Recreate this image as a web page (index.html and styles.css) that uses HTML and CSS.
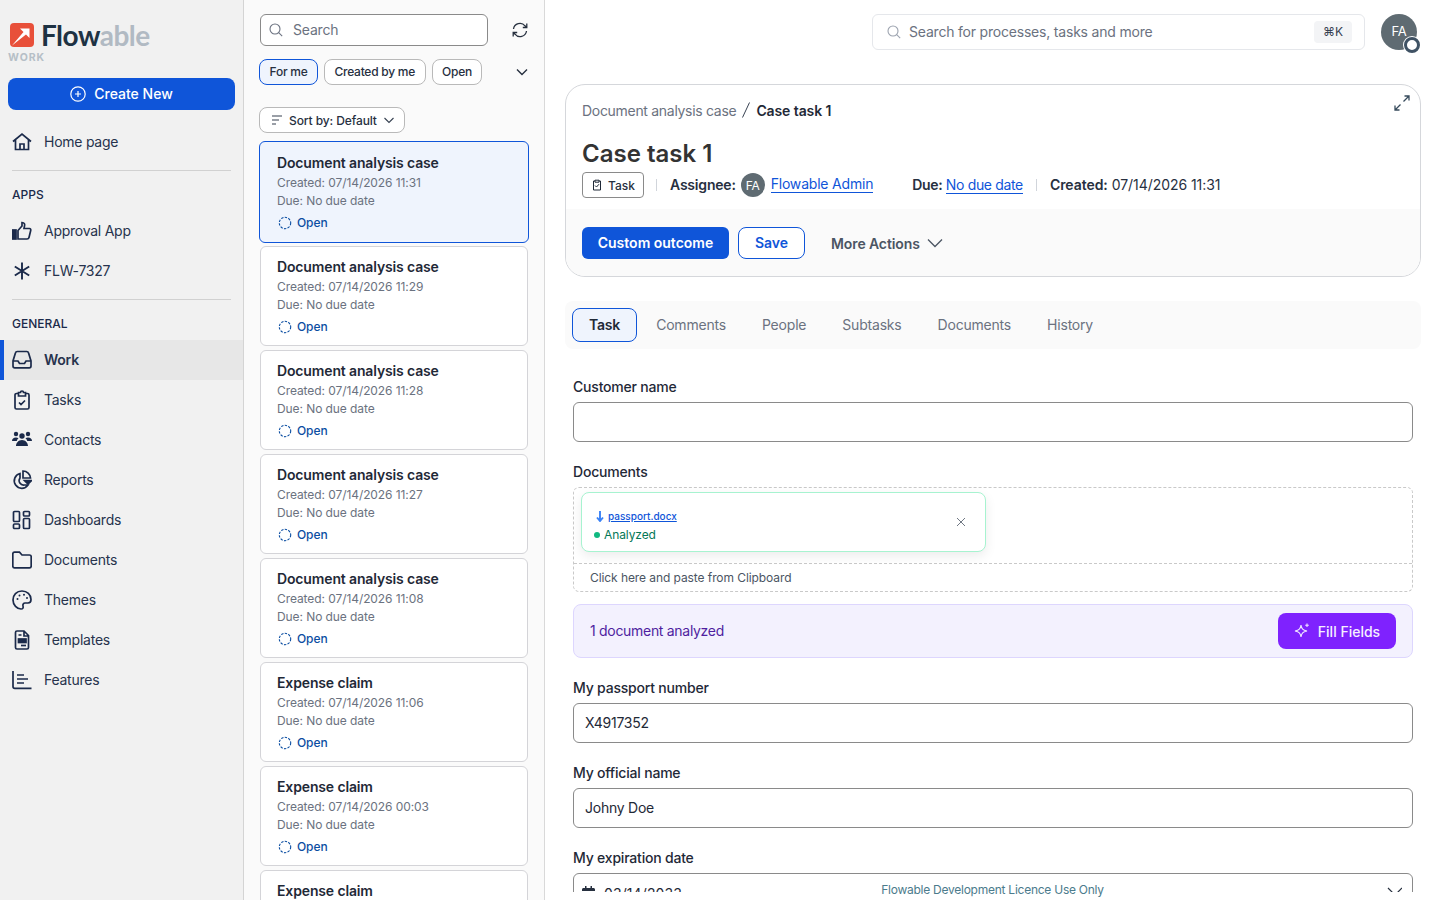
FILE: index.html
```html
<!DOCTYPE html>
<html lang="en">
<head>
    <meta charset="UTF-8">
    <meta name="viewport" content="width=device-width, initial-scale=1.0">
    <title>Flowable Work</title>
    <link rel="stylesheet" href="styles.css">
</head>
<body>
<div class="app">

    <!-- left navigation -->
    <aside class="sidebar">
        <div class="logo">
            <div class="logo-row">
                <svg class="logo-mark" viewBox="0 0 24 24" width="24" height="24">
                    <rect x="0" y="0" width="24" height="24" rx="4" fill="#e8503a"/>
                    <path d="M2 22.500 L13.500 9 L10 5.500 H19.500 V15 L16 11.500 Z" fill="#fff"/>
                </svg>
                <span class="logo-text">Flow<span class="logo-light">able</span></span>
            </div>
            <div class="logo-sub">WORK</div>
        </div>
        <button class="btn-create">
            <svg width="16" height="16" viewBox="0 0 16 16" fill="none" stroke="#fff" stroke-width="1.2"><circle cx="8" cy="8" r="7.2"/><path d="M8 5v6M5 8h6"/></svg>
            Create New
        </button>

        <a class="nav-item home">
            <svg class="nav-icon" viewBox="0 0 20 20"><path d="M1 9.5 10 2l9 7.5M3.5 8v9.5h13V8M8 17.5v-5.500h4v5.500"/></svg>
            Home page
        </a>
        <div class="nav-divider"></div>
        <div class="nav-heading">APPS</div>
        <a class="nav-item">
            <svg class="nav-icon" viewBox="0 0 20 20"><rect x="0.500" y="9" width="3.500" height="9" fill="#1b2a4a"/><path d="M6 9.500 10 5V1.500c2.500 0 3 2 2.500 3.500L12 7.500h5.500c1 0 1.500 1 1.200 2l-1.700 7c-.2.800-.8 1.500-2 1.500H6z"/></svg>
            Approval App
        </a>
        <a class="nav-item">
            <svg class="nav-icon asterisk" viewBox="0 0 20 20"><path d="M10 1.500v17M2.800 5.500l14.400 9M17.200 5.500l-14.400 9"/></svg>
            FLW-7327
        </a>
        <div class="nav-divider"></div>
        <div class="nav-heading">GENERAL</div>
        <a class="nav-item active">
            <svg class="nav-icon" viewBox="0 0 20 20"><path d="M1 11V16c0 1 .8 1.800 1.800 1.800h14.400c1 0 1.800-.8 1.800-1.800v-5l-2.500-8.200c-.2-.8-.8-1.300-1.700-1.300H5.200c-.9 0-1.500.5-1.700 1.300zM1 11h5l1.500 2.500h5L14 11h5"/></svg>
            Work
        </a>
        <a class="nav-item">
            <svg class="nav-icon" viewBox="0 0 20 20"><path d="M6.500 3.500H4.500c-.8 0-1.500.7-1.500 1.500v12.500c0 .8.700 1.500 1.500 1.500h11c.8 0 1.500-.7 1.500-1.500V5c0-.8-.7-1.500-1.500-1.500h-2M6.500 2.500h2c0-2 3-2 3 0h2v3.500h-7zM7 12.500l2 2 4-4"/></svg>
            Tasks
        </a>
        <a class="nav-item">
            <svg class="nav-icon solid" viewBox="0 0 20 20"><circle cx="4" cy="4" r="2.200"/><circle cx="16" cy="4" r="2.200"/><circle cx="10" cy="6" r="2.700"/><path d="M0 11c0-2 1.500-3.500 4-3.500 1 0 1.800.2 2.500.7C5.500 9 5 10 4.800 11zM20 11c0-2-1.500-3.500-4-3.500-1 0-1.800.2-2.500.7 1 .8 1.500 1.800 1.700 2.800zM4 16c0-3 2.500-6 6-6s6 3 6 6z"/></svg>
            Contacts
        </a>
        <a class="nav-item">
            <svg class="nav-icon" viewBox="0 0 20 20"><path d="M8 3.500a7.500 7.500 0 1 0 8 11.500h-3.500A4.500 4.500 0 0 1 8 8zM11 1v7h7.500A7.500 7.500 0 0 0 11 1z"/><path d="M12.500 10.500h7l-3.500 3.500z" fill="#1b2a4a"/></svg>
            Reports
        </a>
        <a class="nav-item">
            <svg class="nav-icon" viewBox="0 0 20 20"><rect x="1.500" y="1.500" width="6" height="10" rx="1"/><rect x="1.500" y="14" width="6" height="4.500" rx="1"/><rect x="11.500" y="1.500" width="6" height="4.500" rx="1"/><rect x="11.500" y="8.500" width="6" height="10" rx="1"/></svg>
            Dashboards
        </a>
        <a class="nav-item">
            <svg class="nav-icon" viewBox="0 0 20 20"><path d="M.8 4c0-1 .7-1.800 1.700-1.800h5L10 5h7.500c1 0 1.700.8 1.700 1.800V16c0 1-.7 1.800-1.700 1.800h-15C1.500 17.800.8 17 .8 16z"/></svg>
            Documents
        </a>
        <a class="nav-item">
            <svg class="nav-icon" viewBox="0 0 20 20"><path d="M10 1C4.500 1 1 5 1 10c0 5 4 9 8 9 2 0 2.500-1.500 2-3-.5-1.500.5-3 2-3h3c2 0 3-1.500 3-3.500C19 4.500 15 1 10 1z"/><circle class="dot" cx="5.500" cy="9" r="1"/><circle class="dot" cx="7.500" cy="5.500" r="1"/><circle class="dot" cx="12" cy="4.800" r="1"/><circle class="dot" cx="15" cy="8" r="1"/></svg>
            Themes
        </a>
        <a class="nav-item">
            <svg class="nav-icon" viewBox="0 0 20 20"><path d="M3.500 2.500c0-.8.700-1.500 1.500-1.500h7l4.500 4.500V17.500c0 .8-.7 1.500-1.500 1.500H5c-.8 0-1.500-.7-1.500-1.500zM12 1v5h4.500M6.500 5h3"/><rect x="6.500" y="9" width="7.500" height="3.500" fill="#1b2a4a"/><path d="M9 15.500h5"/></svg>
            Templates
        </a>
        <a class="nav-item">
            <svg class="nav-icon" viewBox="0 0 20 20"><path d="M1 1v15.500c0 1 .8 1.800 1.800 1.800H19.500M5 5h7M5 9h11M5 13h7"/></svg>
            Features
        </a>
    </aside>

    <!-- work list -->
    <section class="list-pane">
        <div class="list-search-row">
            <div class="list-search">
                <svg width="14" height="14" viewBox="0 0 14 14" fill="none" stroke="#6b7280" stroke-width="1.100"><circle cx="6" cy="6" r="5"/><path d="m9.700 9.700 3.500 3.500"/></svg>
                <span>Search</span>
            </div>
            <svg class="refresh" width="16" height="16" viewBox="0 0 16 16" fill="none" stroke="#27303f" stroke-width="1.300"><path d="M1.500 7A6.500 6.500 0 0 1 13 3.800L14.800 5.500M14.800 1.500v4h-4M14.500 9A6.500 6.500 0 0 1 3 12.200L1.200 10.500M1.200 14.500v-4h4"/></svg>
        </div>
        <div class="chips">
            <span class="chip selected">For me</span>
            <span class="chip">Created by me</span>
            <span class="chip">Open</span>
            <svg class="chips-more" width="14" height="14" viewBox="0 0 14 14" fill="none" stroke="#27303f" stroke-width="1.400"><path d="m2 4.500 5 5 5-5"/></svg>
        </div>
        <div class="sort">
            <svg width="12" height="10" viewBox="0 0 12 10" fill="none" stroke="#374151" stroke-width="1.200"><path d="M1 1h10M1 5h7M1 9h4"/></svg>
            Sort by: Default
            <svg width="12" height="12" viewBox="0 0 12 12" fill="none" stroke="#374151" stroke-width="1.100"><path d="m1.500 4 4.500 4.500L10.500 4"/></svg>
        </div>
        <div class="cards" id="cards"></div>
    </section>

    <!-- main content -->
    <main class="main">
        <div class="main-scroll">
            <div class="topbar">
                <div class="global-search">
                    <svg width="14" height="14" viewBox="0 0 14 14" fill="none" stroke="#9ca3af" stroke-width="1.100"><circle cx="6" cy="6" r="5"/><path d="m9.700 9.700 3.500 3.500"/></svg>
                    <span class="global-search-text">Search for processes, tasks and more</span>
                    <span class="kbd">⌘K</span>
                </div>
                <div class="avatar">FA<span class="avatar-status"></span></div>
            </div>

            <div class="task-head">
                <div class="task-head-top">
                    <svg class="expand" width="16" height="16" viewBox="0 0 16 16" fill="none" stroke="#374b5c" stroke-width="1.300"><path d="M9.500 6.500 15 1M10.500 1H15v4.500M6.500 9.500 1 15M1 10.500V15h4.500"/></svg>
                    <div class="breadcrumb">
                        <span class="crumb-parent">Document analysis case</span>
                        <svg width="10" height="18" viewBox="0 0 10 18" fill="none" stroke="#374151" stroke-width="1"><path d="M8.500 1.500 1.500 16.500"/></svg>
                        <span class="crumb-current">Case task 1</span>
                    </div>
                    <h1>Case task 1</h1>
                    <div class="meta">
                        <span class="type-tag">
                            <svg width="12" height="12" viewBox="0 0 12 12" fill="none" stroke="#1f2937" stroke-width="1"><path d="M4 2H2.500v9h7V2H8M4 1.200h4v2H4zM4 6.500l1.500 1.500L8 5.200"/></svg>
                            Task
                        </span>
                        <span class="sep first"></span>
                        <b class="meta-text">Assignee:</b>
                        <span class="mini-avatar">FA</span>
                        <a class="link meta-text">Flowable Admin</a>
                        <span class="due meta-text"><b>Due:</b> <a class="link">No due date</a></span>
                        <span class="sep"></span>
                        <span class="created meta-text"><b>Created:</b> 07/14/2026 11:31</span>
                    </div>
                </div>
                <div class="task-actions">
                    <button class="btn-primary">Custom outcome</button>
                    <button class="btn-outline">Save</button>
                    <span class="more-actions">More Actions
                        <svg width="16" height="16" viewBox="0 0 16 16" fill="none" stroke="#4b5563" stroke-width="1.300"><path d="m1 4.500 7 7 7-7"/></svg>
                    </span>
                </div>
            </div>

            <nav class="tabs">
                <span class="tab selected">Task</span>
                <span class="tab">Comments</span>
                <span class="tab">People</span>
                <span class="tab">Subtasks</span>
                <span class="tab">Documents</span>
                <span class="tab">History</span>
            </nav>

            <form class="task-form">
                <label>Customer name</label>
                <div class="field"></div>

                <label>Documents</label>
                <div class="dropzone">
                    <div class="dropzone-files">
                        <div class="file-card">
                            <div class="file-info">
                                <div class="file-name">
                                    <svg width="8" height="11" viewBox="0 0 8 11" fill="none" stroke="#3b82f6" stroke-width="1.900"><path d="M4 0v9.500M1 6.500l3 3.500 3-3.500"/></svg>
                                    <a>passport.docx</a>
                                </div>
                                <div class="file-status"><i></i>Analyzed</div>
                            </div>
                            <svg width="10" height="10" viewBox="0 0 10 10" fill="none" stroke="#4b5563" stroke-width=".8"><path d="m1 1 8 8M9 1 1 9"/></svg>
                        </div>
                    </div>
                    <div class="dropzone-paste">Click here and paste from Clipboard</div>
                </div>

                <div class="analyzed-bar">
                    <span class="analyzed-text">1 document analyzed</span>
                    <button type="button" class="btn-fill">
                        <svg width="16" height="16" viewBox="0 0 16 16" fill="none" stroke="#f0e6ff" stroke-width="1.100"><path d="M7 2c.6 4 1.800 5.200 6 6-4.200.8-5.400 2-6 6-.6-4-1.800-5.200-6-6 4.200-.8 5.400-2 6-6zM13 .5v3.600M11.200 2.300h3.600"/></svg>
                        Fill Fields
                    </button>
                </div>

                <label>My passport number</label>
                <div class="field"><span class="field-value">X4917352</span></div>

                <label>My official name</label>
                <div class="field"><span class="field-value">Johny Doe</span></div>

                <label>My expiration date</label>
                <div class="field date">
                    <svg width="13" height="14" viewBox="0 0 13 14" fill="#27303f"><path d="M3 0h1.500v2h4V0H10v2h1.500c.8 0 1.500.7 1.500 1.500V5H0V3.500C0 2.700.7 2 1.500 2H3z"/></svg>
                    <span>03/14/2033</span>
                    <svg class="date-chevron" width="16" height="16" viewBox="0 0 16 16" fill="none" stroke="#27303f" stroke-width="1.200"><path d="m2 3 7 7 7-7"/></svg>
                </div>
            </form>
        </div>
        <div class="licence">Flowable Development Licence Use Only</div>
    </main>
</div>

<script>
    const workItems = [
        ["Document analysis case", "07/14/2026 11:31"],
        ["Document analysis case", "07/14/2026 11:29"],
        ["Document analysis case", "07/14/2026 11:28"],
        ["Document analysis case", "07/14/2026 11:27"],
        ["Document analysis case", "07/14/2026 11:08"],
        ["Expense claim", "07/14/2026 11:06"],
        ["Expense claim", "07/14/2026 00:03"],
        ["Expense claim", "07/14/2026 00:01"]
    ];

    const cardList = document.getElementById("cards");

    workItems.forEach((item, i) => {
        let card = document.createElement("div");
        card.className = i === 0 ? "card selected" : "card";
        card.innerHTML = `
            <div class="card-title">${item[0]}</div>
            <div class="card-line">Created: ${item[1]}</div>
            <div class="card-line">Due: No due date</div>
            <div class="card-state">
                <svg width="14" height="14" viewBox="0 0 14 14" fill="none" stroke="#0b4ea2" stroke-width="1.100" stroke-dasharray="2.400 1.300"><circle cx="7" cy="7" r="5.700"/></svg>
                Open
            </div>`;
        cardList.appendChild(card);
    });
</script>
</body>
</html>
```

FILE: styles.css
```css
* {
    margin: 0;
    padding: 0;
    box-sizing: border-box;
}

body {
    font-family: Inter, "Noto Sans", sans-serif;
    font-size: 14px;
    letter-spacing: -0.2px;
    color: #1f2937;
    background: #fff;
    overflow: hidden;
}

button {
    font-family: inherit;
    border: none;
}

.app {
    display: flex;
    height: 100vh;
}

/* sidebar */
.sidebar {
    width: 244px;
    flex: none;
    background: #f1f1f1;
    border-right: 1px solid #d4d4d4;
    padding-top: 20px;
}

.logo {
    height: 58px;
    padding-left: 8px;
}

.logo-row {
    display: flex;
    align-items: center;
    gap: 7px;
    padding-left: 2px;
    height: 30px;
}

.logo-mark {
    flex: none;
    margin-top: 0;
}

.logo-text {
    font-family: Lato, sans-serif;
    font-size: 28px;
    font-weight: 700;
    line-height: 28px;
    color: #1e3243;
    letter-spacing: -0.5px;
}

.logo-light {
    color: #b1bac3;
}

.logo-sub {
    font-size: 10.500px;
    font-weight: 700;
    letter-spacing: 1px;
    color: #b6bfc7;
    margin-top: 1px;
}

.btn-create {
    display: flex;
    align-items: center;
    justify-content: center;
    gap: 8px;
    width: 227px;
    height: 32px;
    margin-left: 8px;
    padding-bottom: 2px;
    background: #0f55d9;
    color: #fff;
    font-size: 14px;
    font-weight: 500;
    border-radius: 8px;
}

.btn-create svg {
    margin-top: 2px;
}

.nav-item {
    display: flex;
    align-items: center;
    gap: 12px;
    height: 40px;
    padding-left: 12px;
    padding-bottom: 2px;
    letter-spacing: -0.25px;
    color: #27334d;
    border-left: 0 solid #0f55d9;
}

.nav-item.home {
    margin-top: 12px;
}

.nav-icon {
    width: 20px;
    height: 20px;
    margin-top: 2px;
    flex: none;
    fill: none;
    stroke: #1b2a4a;
    stroke-width: 1.700;
}

.nav-icon.asterisk {
    stroke-width: 1.900;
}

.nav-icon.solid {
    fill: #1b2a4a;
    stroke: none;
}

.nav-icon .dot {
    fill: #1b2a4a;
    stroke: none;
}

.nav-item.active {
    background: #e7e7e7;
    border-left-width: 4px;
    padding-left: 8px;
    font-weight: 600;
}

.nav-divider {
    height: 1px;
    background: #d1d1d1;
    margin: 8px 12px 0;
}

.nav-heading {
    font-size: 12px;
    font-weight: 500;
    letter-spacing: 0;
    color: #1b2a4a;
    padding: 16px 12px 9px;
    line-height: 15px;
}

/* list pane */
.list-pane {
    width: 301px;
    flex: none;
    background: #fafafa;
    border-right: 1px solid #d9d9d9;
    padding: 14px 15px 0;
    overflow: hidden;
}

.list-search-row {
    display: flex;
    align-items: center;
    padding-left: 1px;
}

.list-search {
    display: flex;
    align-items: center;
    gap: 10px;
    width: 228px;
    height: 32px;
    background: #fff;
    border: 1px solid #8a8a8a;
    border-radius: 6px;
    padding-left: 8px;
    color: #6b7280;
}

.list-search span {
    padding-bottom: 2px;
}

.refresh {
    margin-left: 24px;
}

.chips {
    display: flex;
    align-items: center;
    gap: 6px;
    margin-top: 13px;
}

.chip {
    height: 26px;
    display: flex;
    align-items: center;
    padding: 0 9.500px 2px;
    font-size: 12px;
    font-weight: 500;
    letter-spacing: -0.25px;
    white-space: nowrap;
    color: #27303f;
    background: #fff;
    border: 1px solid #b9b9b9;
    border-radius: 8px;
}

.chip.selected {
    background: #eff4fd;
    border-color: #0f55d9;
}

.chips-more {
    flex: none;
    margin-left: 27px;
}

.sort {
    display: inline-flex;
    align-items: center;
    gap: 6px;
    width: 146px;
    height: 26px;
    margin-top: 22px;
    padding-left: 11px;
    font-size: 12px;
    font-weight: 500;
    letter-spacing: -0.1px;
    color: #27303f;
    background: #fff;
    border: 1px solid #b9b9b9;
    border-radius: 8px;
}

.cards {
    display: flex;
    flex-direction: column;
    gap: 4px;
    margin-top: 8px;
    padding: 0 1px;
}

.card {
    height: 100px;
    padding: 11px 16px 0;
    background: #fff;
    border: 1px solid #d4d4d8;
    border-radius: 6px;
    flex: none;
}

.card.selected {
    height: 102px;
    margin: 0 -1px -1px;
    padding: 12px 17px 0;
    background: #eff4fd;
    border-color: #0f55d9;
}

.card-title {
    font-weight: 600;
    letter-spacing: -0.14px;
    line-height: 18px;
    color: #1f2937;
}

.card-line {
    font-size: 12px;
    letter-spacing: -0.08px;
    line-height: 18px;
    color: #6b7280;
}

.card-line:nth-child(2) {
    margin-top: 2px;
}

.card-state {
    display: flex;
    align-items: center;
    gap: 5px;
    margin-top: 4px;
    padding-left: 1px;
    font-size: 12px;
    font-weight: 500;
    letter-spacing: -0.08px;
    line-height: 18px;
    color: #0b4ea2;
}

/* main */
.main {
    position: relative;
    flex: 1;
    min-width: 0;
}

.main-scroll {
    height: 892px;
    overflow: hidden;
}

.topbar {
    display: flex;
    align-items: flex-start;
    height: 50px;
    margin-top: 14px;
    padding-left: 327px;
}

.global-search {
    display: flex;
    align-items: center;
    gap: 8px;
    width: 493px;
    height: 36px;
    padding: 0 12px 0 14px;
    background: #fff;
    border: 1px solid #e5e7eb;
    border-radius: 6px;
    color: #6b7280;
}

.global-search-text {
    flex: 1;
    padding-bottom: 2px;
}

.kbd {
    font-size: 12px;
    letter-spacing: 0;
    background: #f3f4f6;
    color: #374151;
    border-radius: 4px;
    padding: 3px 9px;
    line-height: 16px;
}

.avatar {
    position: relative;
    width: 36px;
    height: 36px;
    margin-left: 16px;
    padding-bottom: 2px;
    border-radius: 50%;
    background: #5f6b72;
    color: #fff;
    font-size: 13px;
    display: flex;
    align-items: center;
    justify-content: center;
}

.avatar-status {
    position: absolute;
    right: -3px;
    bottom: -3px;
    width: 16px;
    height: 16px;
    border-radius: 50%;
    background: #fff;
    border: 3px solid #3f5264;
    box-shadow: 0 0 0 1px #fff;
}

.task-head {
    margin: 20px 19px 0 20px;
    height: 193px;
    border: 1px solid #d5d7db;
    border-radius: 20px;
    overflow: hidden;
    background: #fff;
}

.task-head-top {
    position: relative;
    height: 124px;
    padding: 15px 16px 0;
}

.expand {
    position: absolute;
    top: 10px;
    right: 10px;
}

.breadcrumb {
    display: flex;
    align-items: center;
    gap: 5px;
    height: 20px;
}

.crumb-parent {
    letter-spacing: -0.3px;
    color: #6b7280;
}

.crumb-current {
    font-weight: 600;
    letter-spacing: -0.1px;
}

h1 {
    font-size: 24px;
    font-weight: 600;
    letter-spacing: 0;
    color: #333;
    line-height: 32px;
    margin-top: 18px;
}

.meta {
    display: flex;
    align-items: center;
    height: 26px;
    margin-top: 2px;
    color: #27303f;
}

.meta b {
    font-weight: 600;
}

.meta-text {
    margin-bottom: 2px;
}

.type-tag {
    display: flex;
    align-items: center;
    gap: 5px;
    width: 62px;
    height: 26px;
    padding-left: 8px;
    font-size: 12px;
    font-weight: 500;
    letter-spacing: 0;
    border: 1px solid #8a8a8a;
    border-radius: 4px;
    background: #fff;
}

.sep {
    width: 1px;
    height: 12px;
    background: #d1d5db;
    margin: 0 13px;
}

.sep.first {
    margin-left: 12px;
}

.mini-avatar {
    width: 24px;
    height: 24px;
    margin: 0 6px 0 5px;
    border-radius: 50%;
    background: #5f6b72;
    color: #fff;
    font-size: 12px;
    display: flex;
    align-items: center;
    justify-content: center;
}

.link {
    color: #0f55d9;
    border-bottom: 1px solid #0f55d9;
    line-height: 17px;
}

.due {
    margin-left: 39px;
    letter-spacing: -0.35px;
}

.created {
    letter-spacing: -0.05px;
}

.task-actions {
    display: flex;
    align-items: center;
    height: 68px;
    padding: 0 16px 0;
    background: #fafafa;
}

.btn-primary {
    width: 147px;
    height: 32px;
    padding-bottom: 2px;
    background: #0f55d9;
    color: #fff;
    font-size: 14px;
    font-weight: 600;
    border-radius: 6px;
}

.btn-outline {
    width: 67px;
    height: 32px;
    margin-left: 9px;
    padding-bottom: 2px;
    background: #fff;
    color: #0f55d9;
    font-size: 14px;
    font-weight: 600;
    border: 1px solid #0f55d9;
    border-radius: 8px;
}

.more-actions {
    display: flex;
    align-items: center;
    gap: 7px;
    margin-left: 26px;
    font-weight: 600;
    letter-spacing: -0.1px;
    color: #4b5563;
}

.tabs {
    display: flex;
    align-items: center;
    height: 48px;
    margin: 24px 19px 0 20px;
    padding-left: 7px;
    background: #fafafa;
    border-radius: 8px;
}

.tab {
    padding: 0 18px;
    color: #6b7280;
    line-height: 34px;
}

.tab.selected {
    padding: 0 16px;
    height: 34px;
    margin-right: 1px;
    color: #1f2937;
    font-weight: 600;
    background: #eff4fd;
    border: 1px solid #0f55d9;
    border-radius: 8px;
    line-height: 32px;
}

.task-form {
    padding: 0 27px 0 28px;
}

.task-form label {
    display: block;
    font-weight: 500;
    line-height: 18px;
    margin-top: 21px;
    margin-bottom: 6px;
    color: #1f2937;
}

.task-form label:first-child {
    margin-top: 29px;
}

.field {
    height: 40px;
    padding: 0 11px;
    display: flex;
    align-items: center;
    background: #fff;
    border: 1px solid #8a8a8a;
    border-radius: 6px;
    color: #1f2937;
}

.field-value {
    padding-bottom: 2px;
    letter-spacing: -0.25px;
}

.dropzone {
    height: 105px;
    border: 1px dashed #c9c9c9;
    border-radius: 6px;
}

.dropzone-files {
    height: 76px;
    padding: 4px 7px 0;
    border-bottom: 1px dashed #c9c9c9;
}

.file-card {
    display: flex;
    align-items: center;
    justify-content: space-between;
    width: 405px;
    height: 60px;
    padding: 8px 19px 0 12px;
    background: #fff;
    border: 1px solid #a7f3d0;
    border-radius: 8px;
    box-shadow: 0 4px 12px rgba(0, 0, 0, 0.08);
}

.file-card > svg {
    margin-top: -8px;
}

.file-name {
    display: flex;
    align-items: center;
    gap: 4px;
    padding-left: 2px;
    font-size: 10px;
    font-weight: 500;
    letter-spacing: 0;
    line-height: 14px;
}

.file-name a {
    color: #0f55d9;
    text-decoration: underline;
}

.file-status {
    display: flex;
    align-items: center;
    gap: 4px;
    font-size: 12px;
    letter-spacing: -0.1px;
    color: #047857;
    margin-top: 4px;
    line-height: 16px;
}

.file-status i {
    width: 6px;
    height: 6px;
    border-radius: 50%;
    background: #10b981;
}

.dropzone-paste {
    font-size: 12px;
    letter-spacing: -0.08px;
    color: #4b5563;
    padding: 6px 16px;
    line-height: 16px;
}

.analyzed-bar {
    display: flex;
    align-items: center;
    justify-content: space-between;
    height: 54px;
    margin-top: 12px;
    padding: 0 16px;
    background: #f3f1fe;
    border: 1px solid #ddd6fe;
    border-radius: 8px;
    color: #4f1fa0;
}

.analyzed-text {
    padding-bottom: 2px;
    letter-spacing: -0.3px;
}

.btn-fill {
    display: flex;
    align-items: center;
    justify-content: center;
    gap: 8px;
    width: 118px;
    height: 36px;
    background: #7f22fe;
    color: #f5efff;
    font-size: 14px;
    font-weight: 500;
    border-radius: 8px;
}

.field.date {
    gap: 9px;
    padding: 0 10px 0 8px;
    letter-spacing: 0.1px;
}

.date-chevron {
    margin-left: auto;
}

.licence {
    position: absolute;
    left: 0;
    right: 0;
    top: 883px;
    text-align: center;
    font-size: 12px;
    letter-spacing: -0.25px;
    line-height: 14px;
    color: #4b7b8c;
}
```
